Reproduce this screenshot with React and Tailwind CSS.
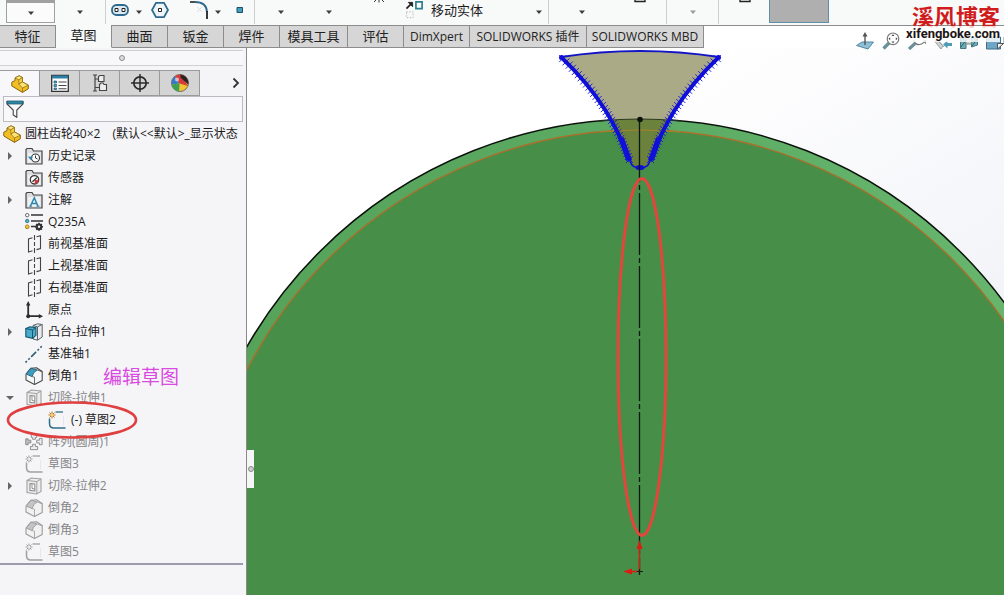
import React from "react";

const FONT = "font-['Open_Sans','Noto_Sans_CJK_SC',sans-serif]";

/* ---------- small shared drawings ---------- */

function Caret({ muted = false }) {
  return (
    <svg viewBox="0 0 6 4" className={muted ? "w-1.5 h-1 fill-[#9a9a9a]" : "w-1.5 h-1 fill-[#3c3c3c]"} aria-hidden="true">
      <path d="M0 0.5H6L3 4Z" />
    </svg>
  );
}

function DropButton({ label, className, muted }) {
  return (
    <button type="button" aria-label={label} className={"flex h-6 shrink-0 items-center justify-center " + className}>
      <Caret muted={muted} />
    </button>
  );
}

function Separator() {
  return <span className="h-6 w-px shrink-0 bg-[#cfcfcf]" />;
}

function PartIcon() {
  return (
    <svg viewBox="0 0 18 18" className="size-[18px] shrink-0" strokeLinejoin="round" aria-hidden="true">
      <path d="M4 3L8 0.8L11.5 2.5V7L17.3 10.2V13.8L11.5 17.4L0.8 11V7.2L4 5.6Z" fill="#f0bf25" stroke="#8a6508" strokeWidth="1" />
      <path d="M4 3L7.8 4.8L11.5 2.5L8 0.8Z" fill="#fde98a" stroke="#8a6508" strokeWidth="0.7" />
      <path d="M7.8 9V4.8L11.5 2.5V7Z" fill="#f6cf45" stroke="#8a6508" strokeWidth="0.6" />
      <path d="M7.8 9L11.5 7L17.3 10.2L11.5 13Z" fill="#fde27a" stroke="#8a6508" strokeWidth="0.7" />
      <path d="M11.5 13V17.4" fill="none" stroke="#8a6508" strokeWidth="0.7" />
    </svg>
  );
}

function Svg18({ children }) {
  return (
    <svg viewBox="0 0 18 18" className="size-[18px] shrink-0" fill="none" aria-hidden="true">
      {children}
    </svg>
  );
}

function Folder({ children }) {
  return (
    <Svg18>
      <path d="M1 17V2.5L2 1.5H7L8.5 4H17V17Z" fill="#dcdde0" stroke="#444" strokeWidth="1.2" />
      <path d="M3 6H15.5V15.5H3Z" fill="#eef0f2" />
      {children}
    </Svg18>
  );
}

function HistoryIcon() {
  return (
    <Folder>
      <circle cx="10.5" cy="11" r="4" fill="#fff" stroke="#333" strokeWidth="1.1" />
      <path d="M10.5 8.5V11L12.5 12" stroke="#333" />
      <path d="M3 9.5L5.5 13L8 9.8Z" fill="#2f86b5" />
    </Folder>
  );
}

function SensorIcon() {
  return (
    <Folder>
      <circle cx="9.5" cy="10.8" r="4.2" fill="#fff" stroke="#333" strokeWidth="1.3" />
      <path d="M9.5 15A4.2 4.2 0 0 0 13.7 10.8L10 11Z" fill="#d43a3a" />
      <path d="M7.5 12.8L11.8 8.6" stroke="#222" strokeWidth="1.2" />
    </Folder>
  );
}

function NoteIcon() {
  return (
    <Folder>
      <path d="M5.3 15.2L9.3 6.8L13 15.2M6.8 12.6H12" stroke="#2c86ad" strokeWidth="1.5" />
      <path d="M4.3 15.2H7M11.5 15.2H14.5" stroke="#2c86ad" strokeWidth="1" />
    </Folder>
  );
}

function MaterialIcon() {
  return (
    <Svg18>
      <path d="M6 2H18M6 8H18M6 13.5H11" stroke="#333" strokeWidth="1.6" />
      <circle cx="2.2" cy="2.2" r="1.7" fill="#fff" stroke="#555" strokeWidth="0.9" />
      <circle cx="2.2" cy="8" r="1.7" fill="#56b4d3" stroke="#2c6f88" strokeWidth="0.9" />
      <circle cx="2.2" cy="13.8" r="1.9" fill="#f4c536" stroke="#a27a12" strokeWidth="0.9" />
      <circle cx="14" cy="13.8" r="2.3" stroke="#333" strokeWidth="2.2" />
      <path d="M14 9.8V11.4M14 16.2V17.8M10 13.8H11.6M16.4 13.8H18M11.2 11L12.3 12.1M15.7 15.5L16.8 16.6M16.8 11L15.7 12.1M12.3 15.5L11.2 16.6" stroke="#333" strokeWidth="1.6" />
    </Svg18>
  );
}

function PlaneIcon() {
  return (
    <Svg18>
      <path d="M7.5 2.8L3.5 4V17L7.5 15.8M11.5 1.8L15.5 0.8V13.5L11.5 14.6" stroke="#444" strokeWidth="1.1" />
      <path d="M9.5 0V5M9.5 7V11M9.5 13V18" stroke="#444" strokeWidth="1.1" />
    </Svg18>
  );
}

function OriginIcon() {
  return (
    <Svg18>
      <path d="M3.2 3V15.2H15" stroke="#2d2d2d" strokeWidth="1.8" />
      <path d="M3.2 0L5.4 4.5H1ZM18 15.2L13.8 13V17.4Z" fill="#2d2d2d" />
      <circle cx="3.2" cy="15.2" r="2" fill="#2d2d2d" />
    </Svg18>
  );
}

function BossIcon() {
  return (
    <Svg18>
      <path d="M8 2.5L12.5 0.8L17.2 1.5V14L12.5 17.2L8 16Z" fill="#e9ebec" stroke="#59636a" />
      <path d="M12.5 17.2V3.8L17.2 1.5M12.5 3.8L8 2.5" stroke="#59636a" />
      <path d="M0.8 5.5L5 3.8L11 4.8V12.3L7.5 15.3L0.8 13.8Z" fill="#4ba9c9" stroke="#155670" strokeWidth="1.1" />
      <path d="M0.8 5.5L7.5 7V15.3M7.5 7L11 4.8" stroke="#155670" />
    </Svg18>
  );
}

function AxisIcon() {
  return (
    <Svg18>
      <path d="M0.5 17.5L17.5 0.5" stroke="#316078" strokeWidth="1.6" strokeDasharray="2 2 2 2 7 2" />
    </Svg18>
  );
}

function ChamferIcon({ muted }) {
  const line = muted ? "#9a9a9a" : "#4a4a4a";
  return (
    <Svg18>
      <path d="M1 7L6 1.2L11.5 0.8L17.2 4.5V13.5L9.5 17.4L1 13Z" fill={muted ? "#f1f1f2" : "#f6f7f8"} stroke={line} strokeWidth="1.1" strokeLinejoin="round" />
      <path d="M1.2 7L6 1.2L12.2 3Q8 5 7 9.6Z" fill={muted ? "#c4c4c5" : "#3e9dbf"} stroke={muted ? line : "#1d5f7a"} strokeWidth="0.9" />
      <path d="M7 9.6L9.5 10.2V17.2M12.2 3L17 4.8" stroke={line} strokeWidth="0.8" />
    </Svg18>
  );
}

function CutIcon() {
  return (
    <Svg18>
      <path d="M2 3.5L6.5 1L16 2V14.5L11.5 17L2 15.5Z" fill="#ededee" stroke="#a0a0a0" strokeWidth="1.1" />
      <path d="M2 3.5L11.8 4.6V17M11.8 4.6L16 2" stroke="#a0a0a0" />
      <path d="M5 6.5L9.8 7V14L5 13.4Z" fill="#fff" stroke="#8d8d8d" strokeWidth="1.1" />
      <path d="M7 6.8V11.5L9.8 12" stroke="#8d8d8d" />
    </Svg18>
  );
}

function SketchIcon({ muted }) {
  return (
    <Svg18>
      <path d="M7.5 1H15" stroke={muted ? "#a0a0a0" : "#2e6d86"} strokeWidth="1.3" />
      <path d="M1.5 7.5V12.5Q1.5 17 6 17H17.5" stroke={muted ? "#a0a0a0" : "#2e6d86"} strokeWidth="1.5" />
      <path d="M15.5 5V14.5" stroke="#e2e2e6" strokeWidth="0.8" />
      <path d="M4 0.5V7.5M0.5 4H7.5M1.5 1.5L6.5 6.5M6.5 1.5L1.5 6.5" stroke={muted ? "#9b9b9b" : "#b8701c"} strokeWidth="1" />
      <circle cx="4" cy="4" r="1.2" fill={muted ? "#eee" : "#ffd35a"} />
    </Svg18>
  );
}

function PatternIcon() {
  return (
    <svg viewBox="0 0 20 20" className="size-[18px] shrink-0" fill="none" aria-hidden="true">
      <g stroke="#8f8f90" strokeWidth="1.1" fill="#ececed">
        <path d="M7 1H13V5H11.5V7H8.5V5H7Z" />
        <path d="M6 18.5V15H8.5V12.5H11.5V15H14V18.5Z" />
        <path d="M0.8 6.5H3.5V8H6.5V11H3.5V13H0.8Z" fill="#bdbdbe" />
        <path d="M19 6H16V8H13V11H16V13H19Z" />
      </g>
    </svg>
  );
}

/* ---------- top toolbar ---------- */

function Toolbar() {
  return (
    <div className="flex h-[25px] items-start overflow-hidden bg-[#f8f9f9]" role="toolbar" aria-label="草图工具">
      <button type="button" aria-label="草图绘制" className="ml-1.5 flex h-[23px] w-[49px] shrink-0 items-center justify-center border border-t-[3px] border-[#a0a0a0] bg-[#fbfbfb]">
        <Caret />
      </button>
      <DropButton label="智能尺寸" className="w-[50px]" />
      <Separator />
      <button type="button" aria-label="直槽口" className="ml-[5px] h-5 w-[18px] shrink-0">
        <svg viewBox="0 0 18 20" className="h-5 w-[18px]" fill="none" aria-hidden="true">
          <rect x="1" y="5" width="16" height="10" rx="4.5" fill="#dcebf3" stroke="#2f6a8e" strokeWidth="1.8" />
          <path d="M4 8.5H7V11.5H4ZM11 8.5H14V11.5H11Z" fill="#fff" stroke="#222" />
        </svg>
      </button>
      <DropButton label="槽口选项" className="ml-1 h-5 w-3" />
      <button type="button" aria-label="多边形" className="ml-1.5 h-5 w-[18px] shrink-0">
        <svg viewBox="0 0 18 20" className="h-5 w-[18px]" fill="none" aria-hidden="true">
          <path d="M5 2.8H13L17 10L13 17.2H5L1 10Z" fill="#eef5f9" stroke="#2f6a8e" strokeWidth="1.8" />
          <path d="M7.5 8.5H10.5V11.5H7.5Z" fill="#fff" stroke="#222" />
        </svg>
      </button>
      <button type="button" aria-label="圆角" className="ml-5 h-5 w-5 shrink-0">
        <svg viewBox="0 0 20 20" className="size-5" fill="none" aria-hidden="true">
          <path d="M1 2H6" stroke="#222" strokeWidth="1.6" />
          <path d="M6 2Q17.5 2 18 12" stroke="#2f6a8e" strokeWidth="1.8" />
          <path d="M18 11V19" stroke="#222" strokeWidth="1.8" />
          <path d="M8 7L13 12M8 12L13 7" stroke="#dedede" />
        </svg>
      </button>
      <DropButton label="圆角选项" className="ml-[3px] h-5 w-3" />
      <button type="button" aria-label="点" className="ml-3 h-5 w-2 shrink-0">
        <svg viewBox="0 0 8 20" className="h-5 w-2" aria-hidden="true">
          <path d="M1 7.5H6.5V12.5H1Z" fill="#3fa0c0" stroke="#1f5068" />
        </svg>
      </button>
      <span className="w-2.5 shrink-0" />
      <Separator />
      <DropButton label="剪裁实体" className="ml-5 w-3" />
      <DropButton label="转换实体引用" className="ml-9 w-3" />
      <svg viewBox="0 0 12 3" className="ml-[38px] h-[3px] w-3 shrink-0" aria-hidden="true">
        <path d="M1 2L3 0M6 0V2.5M9 0L11 2" stroke="#333" fill="none" />
      </svg>
      <button type="button" className="ml-5 flex h-5 shrink-0 items-center gap-[7px] text-[13px] leading-5 text-[#1c1c1c]">
        <svg viewBox="0 0 20 20" className="h-5 w-[19px]" fill="none" aria-hidden="true">
          <path d="M1.5 8.5L6.5 3.5" stroke="#222" strokeWidth="1.8" />
          <path d="M3.5 2H8V6.5Z" fill="#222" stroke="#222" />
          <path d="M11.5 1.5H18V8.5H11.5Z" fill="#fff" stroke="#2c7f91" strokeWidth="1.8" />
          <path d="M1.5 12H8.5V18H1.5Z" stroke="#b5b5b5" strokeDasharray="1.5 1.5" />
        </svg>
        移动实体
      </button>
      <DropButton label="移动实体选项" className="ml-[50px] h-5 w-3" />
      <span className="w-[3px] shrink-0" />
      <Separator />
      <DropButton label="显示/删除几何关系" className="ml-[27px] w-3" />
      <svg viewBox="0 0 12 3" className="ml-[46px] h-[3px] w-3 shrink-0" aria-hidden="true">
        <path d="M1 0V1.5H11V0" stroke="#222" strokeWidth="1.4" fill="none" />
      </svg>
      <span className="w-5 shrink-0" />
      <Separator />
      <DropButton label="快速捕捉" className="ml-5 w-3" muted />
      <span className="w-[19px] shrink-0" />
      <Separator />
      <svg viewBox="0 0 12 3" className="ml-5 h-[3px] w-3 shrink-0" aria-hidden="true">
        <path d="M1 0V1.5H11V0" stroke="#222" strokeWidth="1.4" fill="none" />
      </svg>
      <button type="button" aria-label="快速草图" className="ml-[18px] h-[23px] w-[60px] shrink-0 border border-t-0 border-[#5f8ea6] bg-[#afafaf]" />
    </div>
  );
}

const TABS = [
  { label: "特征", width: "w-14" },
  { label: "草图", width: "w-14", active: true },
  { label: "曲面", width: "w-14" },
  { label: "钣金", width: "w-14" },
  { label: "焊件", width: "w-14" },
  { label: "模具工具", width: "w-[68px]" },
  { label: "评估", width: "w-14" },
  { label: "DimXpert", width: "w-[66px]", latin: true },
  { label: "SOLIDWORKS 插件", width: "w-[117px]", latin: true },
  { label: "SOLIDWORKS MBD", width: "w-[117px]", latin: true },
];

function CommandTabs() {
  return (
    <div className="flex h-[23px] items-stretch bg-white">
      <div className="flex shrink-0" role="tablist" aria-label="命令管理器">
        {TABS.map((t) => (
          <button
            key={t.label}
            type="button"
            role="tab"
            aria-selected={!!t.active}
            className={
              "flex items-center justify-center whitespace-nowrap border-r border-b text-[#222] " +
              t.width +
              (t.latin ? " text-[12px]" : " text-[13px]") +
              (t.active ? " border-[#8c8c8c] border-b-[#f8f9f9] bg-[#f8f9f9]" : " border-t border-[#8c8c8c] bg-[#d6d6d6]")
            }
          >
            {t.label}
          </button>
        ))}
      </div>
      <div className="relative z-10 flex flex-1 items-start justify-end gap-2 border-t border-[#8c8c8c] pt-1.5">
        <ViewButton label="正视于">
          <path d="M0.5 13.5L6 10H17.5L12 17Z" fill="#8fc0d8" stroke="#52879f" />
          <path d="M9 13V3" stroke="#555" strokeWidth="1.4" />
          <path d="M9 0L11.5 4.5H6.5Z" fill="#555" />
        </ViewButton>
        <ViewButton label="整屏显示全图">
          <path d="M1.5 16.5L7.5 10.5" stroke="#6a9099" strokeWidth="3.4" />
          <circle cx="11" cy="6.8" r="5.8" fill="#fff" stroke="#777" strokeWidth="1.2" />
          <path d="M11 2.3L12.5 4H9.5ZM11 11.3L12.5 9.6H9.5ZM6.5 6.8L8.2 5.3V8.3ZM15.5 6.8L13.8 5.3V8.3Z" fill="#444" />
        </ViewButton>
        <ViewButton label="局部放大">
          <path d="M1 17L7 11.5" stroke="#6a9099" strokeWidth="3.2" />
          <path d="M5.5 8Q7 13 11.5 12.5Q16 12 16.5 8" fill="#fff" stroke="#777" strokeWidth="1.2" />
          <path d="M17.5 8V12M15.5 10.5H18" stroke="#888" />
        </ViewButton>
        <ViewButton label="上一视图">
          <path d="M0.5 9L3 8L9 14L7 17Z" fill="#d0d4d6" stroke="#9a9fa2" />
          <path d="M4 8L10 15" stroke="#9a9fa2" />
          <path d="M9 12.5L13.5 8.5V11H18V14H13.5V16.5Z" fill="#4f9bb7" />
        </ViewButton>
        <ViewButton label="剖面视图">
          <path d="M0.5 5H6V16.5H0.5ZM11.5 5H17.5V13L11.5 15Z" fill="#6cadb8" stroke="#467581" />
          <path d="M6 7H11.5V12H6Z" fill="#cfd6d8" stroke="#7d8588" />
          <path d="M1 15L6 8M1 10L5 5M12 14L17 7" stroke="#2f6068" />
        </ViewButton>
        <ViewButton label="视图定向">
          <path d="M0.5 5H14.5V17H0.5Z" fill="#6ea6c6" stroke="#3f6f8b" />
          <path d="M11.5 17V11.5H18V5" fill="none" stroke="#7c8a92" />
          <path d="M11.5 17L17.5 11.5H11.5Z" fill="#f3f5f6" stroke="#555" />
        </ViewButton>
      </div>
    </div>
  );
}

function ViewButton({ label, children }) {
  return (
    <button type="button" aria-label={label} className="size-[18px] shrink-0">
      <svg viewBox="0 0 18 18" className="size-[18px]" fill="none" aria-hidden="true">
        {children}
      </svg>
    </button>
  );
}

function Watermark() {
  return (
    <div className="pointer-events-none absolute top-1 right-1 z-20 flex flex-col items-end whitespace-nowrap">
      <span className="font-['Noto_Sans_CJK_SC',sans-serif] text-[22px] leading-[22px] font-bold text-[#d01c1c]">溪风博客</span>
      <span className="bg-white/80 font-['Roboto',sans-serif] text-[13px] leading-4 font-bold text-[#201414]">xifengboke.com</span>
    </div>
  );
}

/* ---------- feature manager ---------- */

function PanelTab({ label, active, children }) {
  return (
    <button
      type="button"
      role="tab"
      aria-label={label}
      aria-selected={!!active}
      className={
        "flex h-[26px] w-10 items-center justify-center border-t border-r border-[#9a9a9a] " +
        (active ? "bg-[#f8f8fa]" : "border-b bg-[#d4d4d4]")
      }
    >
      {children}
    </button>
  );
}

function PanelTabs() {
  return (
    <div className="flex items-center">
      <div className="flex" role="tablist" aria-label="管理器">
        <PanelTab label="特征管理" active>
          <PartIcon />
        </PanelTab>
        <PanelTab label="属性管理">
          <Svg18>
            <path d="M0.7 1.5H17.3V17.3H0.7Z" fill="#fff" stroke="#333" strokeWidth="1.3" />
            <path d="M1 1.5H17V4.5H1Z" fill="#2c7fa5" />
            <path d="M3 7H5.5V9H3ZM3 10.5H5.5V12.5H3ZM3 14H5.5V15.5H3Z" fill="#56a6c6" stroke="#25617c" strokeWidth="0.8" />
            <path d="M7.5 8H15.5M7.5 11.5H15.5M7.5 14.8H15.5" stroke="#444" strokeWidth="1.1" />
          </Svg18>
        </PanelTab>
        <PanelTab label="配置管理">
          <Svg18>
            <path d="M2 1H6M2 17H6M4 1V17M4 5H8.5M4 13.5H8.5" stroke="#444" strokeWidth="1.2" />
            <path d="M7.5 2.5L9 1.5H13V7.5H7.5ZM8.5 10.5L10 9H12L13 10.5H15.5V16.5H8.5Z" fill="#eee" stroke="#444" strokeWidth="1.1" />
          </Svg18>
        </PanelTab>
        <PanelTab label="尺寸专家">
          <Svg18>
            <circle cx="9" cy="9" r="6.2" stroke="#2b2b2b" strokeWidth="1.7" />
            <path d="M9 0V18M0 9H18" stroke="#2b2b2b" strokeWidth="1.5" />
          </Svg18>
        </PanelTab>
        <PanelTab label="外观管理">
          <Svg18>
            <circle cx="9" cy="9" r="8.5" fill="#f1c531" stroke="#555" strokeWidth="0.8" />
            <path d="M8.5 9.5L0.7 10.5A8.4 8.4 0 0 1 4 2.2Z" fill="#3b78c8" />
            <path d="M8.5 9.5L4 2.2A8.4 8.4 0 0 1 9.5 0.6L17 12Z" fill="#d53b3b" />
            <path d="M9.5 0.6A8.4 8.4 0 0 1 17.2 10.5L9.5 3.5Z" fill="#2c2226" />
            <path d="M8.5 9.5L0.7 10.5A8.4 8.4 0 0 0 8 17.4Z" fill="#3da154" />
            <circle cx="6" cy="5.5" r="2" fill="#fff" opacity="0.6" />
          </Svg18>
        </PanelTab>
      </div>
      <button type="button" aria-label="更多" className="ml-auto mr-1.5">
        <svg viewBox="0 0 8 12" className="h-3 w-2" fill="none" aria-hidden="true">
          <path d="M1.5 1.5L6 6L1.5 10.5" stroke="#333" strokeWidth="1.8" />
        </svg>
      </button>
    </div>
  );
}

const FEATURES = [
  { label: "历史记录", icon: <HistoryIcon />, toggle: "closed" },
  { label: "传感器", icon: <SensorIcon /> },
  { label: "注解", icon: <NoteIcon />, toggle: "closed" },
  { label: "Q235A", icon: <MaterialIcon /> },
  { label: "前视基准面", icon: <PlaneIcon /> },
  { label: "上视基准面", icon: <PlaneIcon /> },
  { label: "右视基准面", icon: <PlaneIcon /> },
  { label: "原点", icon: <OriginIcon /> },
  { label: "凸台-拉伸1", icon: <BossIcon />, toggle: "closed" },
  { label: "基准轴1", icon: <AxisIcon /> },
  { label: "倒角1", icon: <ChamferIcon />, note: "编辑草图" },
  { label: "切除-拉伸1", icon: <CutIcon />, toggle: "open", muted: true },
  { label: "(-) 草图2", icon: <SketchIcon />, child: true },
  { label: "阵列(圆周)1", icon: <PatternIcon />, muted: true },
  { label: "草图3", icon: <SketchIcon muted />, muted: true },
  { label: "切除-拉伸2", icon: <CutIcon />, toggle: "closed", muted: true },
  { label: "倒角2", icon: <ChamferIcon muted />, muted: true },
  { label: "倒角3", icon: <ChamferIcon muted />, muted: true },
  { label: "草图5", icon: <SketchIcon muted />, muted: true },
];

function Feature({ item }) {
  return (
    <li
      className={
        "relative flex h-[22px] items-center " +
        (item.child ? "pl-[23px] " : "") +
        (item.muted ? "text-[#858587]" : "text-[#1b1b1b]")
      }
    >
      <span className="flex w-[25px] shrink-0 pl-1.5">
        {item.toggle && (
          <button type="button" aria-label={item.label} aria-expanded={item.toggle === "open"}>
            <svg viewBox="0 0 8 8" className="size-2 fill-[#666]" aria-hidden="true">
              {item.toggle === "open" ? <path d="M0 2H8L4 6Z" /> : <path d="M2 0V8L6 4Z" />}
            </svg>
          </button>
        )}
      </span>
      {item.icon}
      <span className="pl-[5px]">{item.label}</span>
      {item.note && (
        <span className="ml-6 font-['Noto_Sans_CJK_SC',sans-serif] text-[19px] leading-5 font-normal text-[#d84ae0]">{item.note}</span>
      )}
      {item.child && (
        <svg viewBox="0 0 132 38" className="pointer-events-none absolute -top-2 left-1.5 z-10 h-[38px] w-[132px]" fill="none" aria-hidden="true">
          <ellipse cx="66" cy="19" rx="64" ry="17.5" stroke="#df3f3f" strokeWidth="2.6" />
        </svg>
      )}
    </li>
  );
}

function FeaturePanel() {
  return (
    <aside className="flex w-[247px] shrink-0 flex-col border-r border-[#8a8a8a] bg-[#f5f5f8]">
      <div className="mt-0.5 mr-[3px] flex h-4 items-center justify-center border-y border-[#d0d0d3] bg-[#f8f8fa]">
        <span className="size-1.5 rounded-full border border-[#8d8d8d] bg-[#ddd]" />
      </div>
      <div className="pt-1">
        <PanelTabs />
      </div>
      <label className="mr-[3px] ml-[3px] flex h-[26px] items-center border border-[#bcbcc0] bg-[#f8f8fa]">
        <svg viewBox="0 0 18 18" className="ml-0.5 size-[18px]" aria-hidden="true">
          <path d="M1 1.5H17V4L10.8 10V17.3L7.2 15V10L1 4Z" fill="#fafafa" stroke="#444" strokeWidth="1.1" />
          <path d="M1 1H17V4H1Z" fill="#2f88a6" stroke="#24586b" strokeWidth="0.8" />
        </svg>
        <input type="text" aria-label="过滤器" className="min-w-0 flex-1 bg-transparent px-1 text-[12px] outline-none" />
      </label>
      <div className="pt-px text-[12px] leading-4">
        <div className="mr-[3px] flex h-[22px] items-center overflow-hidden pl-[3px] whitespace-nowrap text-[#1b1b1b]">
          <PartIcon />
          <span className="pl-1">圆柱齿轮40×2</span>
          <span className="pl-3">(默认&lt;&lt;默认&gt;_显示状态</span>
        </div>
        <ul className="whitespace-nowrap">
          {FEATURES.map((f) => (
            <Feature key={f.label} item={f} />
          ))}
        </ul>
        <div className="mr-[3px] h-0.5 bg-[#9b9bab]" />
      </div>
    </aside>
  );
}

/* ---------- model view ---------- */

const FLANK = [
  [561, 57],
  [600, 94],
  [617, 127],
  [630, 161],
];

function flankPoint(t) {
  const u = 1 - t;
  const w = [u * u * u, 3 * u * u * t, 3 * u * t * t, t * t * t];
  return [0, 1].map((k) => FLANK.reduce((sum, p, i) => sum + p[k] * w[i], 0));
}

const MARKS = Array.from({ length: 34 }, (_, i) => flankPoint((i + 0.5) / 34));

function Flank() {
  return (
    <g stroke="#1010d8" fill="none">
      <path d="M561 57C600 94 617 127 630 161" strokeWidth="3.8" />
      {MARKS.map(([x, y], i) => (
        <path
          key={i}
          d={`M${x - 3.5} ${y - 3.5}L${x + 3.5} ${y + 3.5}M${x + 3.5} ${y - 3.5}L${x - 3.5} ${y + 3.5}`}
          strokeWidth="0.9"
        />
      ))}
      <path d="M621 138L629 160" strokeWidth="5.5" />
    </g>
  );
}

const TOOTH = "M561 57Q640 45 719 57C680 94 663 127 650 161Q648 168 640 168Q632 168 630 161C617 127 600 94 561 57Z";

function ModelView() {
  return (
    <main className="relative min-w-0 flex-1 overflow-hidden bg-white">
      <svg viewBox="247 48 757 547" preserveAspectRatio="xMidYMin slice" className="absolute inset-0 h-full w-full" role="img" aria-label="齿轮模型">
        <defs>
          <linearGradient id="backdrop" x1="0.6" y1="0" x2="1" y2="0.5">
            <stop offset="0" stopColor="#ffffff" />
            <stop offset="1" stopColor="#f2f3f8" />
          </linearGradient>
          <linearGradient id="rim" x1="0" y1="0" x2="1" y2="0">
            <stop offset="0" stopColor="#55a158" />
            <stop offset="0.5" stopColor="#5cab64" />
            <stop offset="1" stopColor="#6ab870" />
          </linearGradient>
          <clipPath id="gear">
            <circle cx="640" cy="572" r="453" />
          </clipPath>
        </defs>
        <rect x="247" y="48" width="757" height="547" fill="url(#backdrop)" />
        <circle cx="640" cy="572" r="453" fill="url(#rim)" stroke="#0b120b" strokeWidth="1.5" />
        <circle cx="640" cy="572" r="442" fill="#478f49" stroke="#a8702c" strokeWidth="1.4" />
        <path d={TOOTH} fill="#abaa87" />
        <g clipPath="url(#gear)">
          <path d={TOOTH} fill="#6b823c" />
          <path d="M600 132Q640 128 680 132" stroke="#a8842c" strokeWidth="1.2" fill="none" />
        </g>
        <path d="M600 121Q640 117 680 121" stroke="#2c3a1c" fill="none" />
        <path d="M561 57Q640 45 719 57" stroke="#1414c4" strokeWidth="1.8" fill="none" />
        <Flank />
        <g transform="matrix(-1 0 0 1 1280 0)">
          <Flank />
        </g>
        <path d="M630 161Q632 168 640 168Q648 168 650 161" stroke="#1010d8" strokeWidth="1.6" fill="none" />
        <ellipse cx="640" cy="167.5" rx="4.5" ry="2.6" fill="#1010d8" />
        <circle cx="561.5" cy="57.5" r="2.5" fill="#1010d8" />
        <circle cx="718.5" cy="57.5" r="2.5" fill="#1010d8" />
        <path d="M639.5 120V575" stroke="#0c160c" strokeWidth="1.3" strokeDasharray="62 3 5 3" />
        <circle cx="640" cy="119.5" r="2.8" fill="#0b120b" />
        <path d="M639.5 571.5V546M639.5 571.5H630" stroke="#d81e12" strokeWidth="1.4" />
        <path d="M639.5 540L642.5 549H636.5ZM623 571.5L632 568.5V574.5Z" fill="#d81e12" />
        <path d="M637 571.5H643M639.5 569V575" stroke="#142014" />
        <ellipse cx="642" cy="357" rx="24" ry="178.5" fill="none" stroke="#e2463c" strokeWidth="3" />
      </svg>
      <button type="button" aria-label="折叠面板" className="absolute top-[402px] left-0 flex h-[38px] w-[7px] items-center justify-center bg-[#f5f5f8]">
        <span className="size-1.5 rounded-full border border-[#8d8d8d] bg-[#ccc]" />
      </button>
    </main>
  );
}

export default function App() {
  return (
    <div className={"relative flex h-screen flex-col overflow-hidden bg-white " + FONT}>
      <header className="shrink-0">
        <Toolbar />
        <CommandTabs />
      </header>
      <Watermark />
      <div className="flex min-h-0 flex-1">
        <FeaturePanel />
        <ModelView />
      </div>
    </div>
  );
}
